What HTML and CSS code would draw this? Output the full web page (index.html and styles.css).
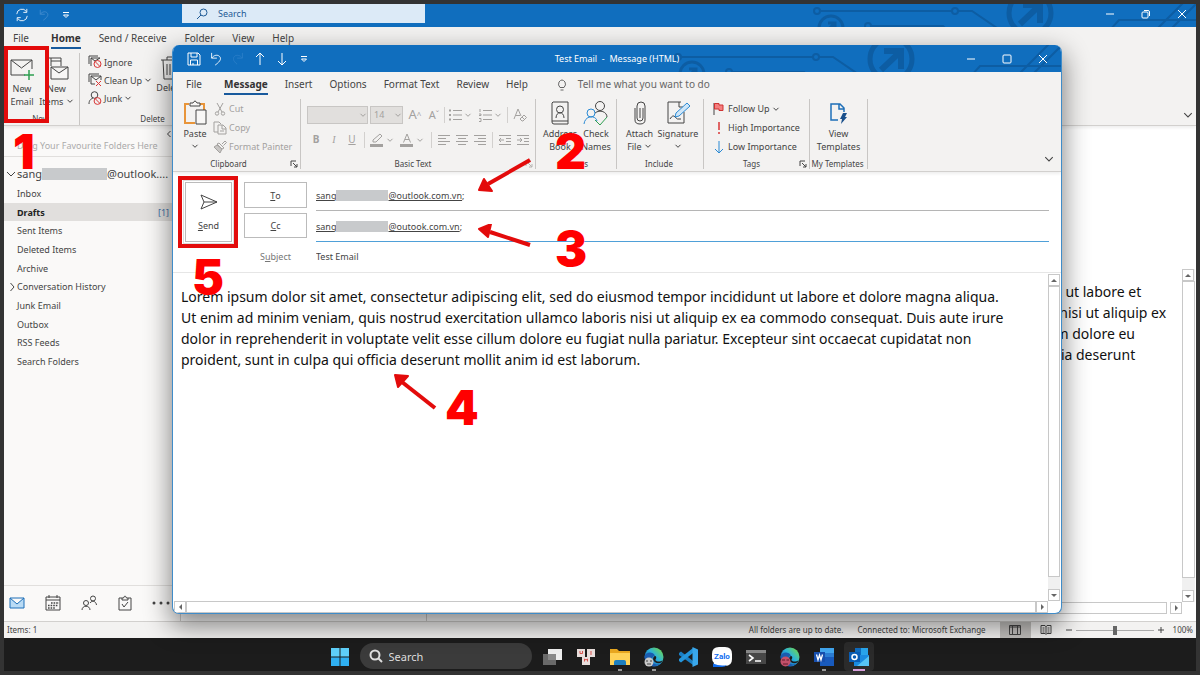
FILE: index.html
```html
<!DOCTYPE html>
<html lang="en">
<head>
<meta charset="utf-8">
<title>Test Email - Message (HTML)</title>
<link rel="stylesheet" href="styles.css">
</head>
<body>
<svg class="defs" aria-hidden="true">
  <defs>
    <linearGradient id="aqua" x1="0" y1="1" x2="1" y2="0"><stop offset=".2" stop-color="#1668bd"/><stop offset=".55" stop-color="#2bb3dc"/><stop offset=".85" stop-color="#63d36a"/></linearGradient>
  </defs>
  <symbol id="chev" viewBox="0 0 8 8"><path d="M1.5 2.8 4 5.3 6.5 2.8"/></symbol>
  <symbol id="launch" viewBox="0 0 8 8"><path d="M1 6V1h5M3 3l4 4M7 4v3H4"/></symbol>
  <symbol id="circuit" viewBox="0 -6 410 34">
    <g fill="none" stroke="#0d5da3" stroke-width="2">
      <circle cx="21" cy="7" r="3"/><path d="M24 7h132M162 7h14l25 17"/><circle cx="159" cy="7" r="3"/>
      <circle cx="35" cy="24" r="12" stroke-width="3"/><path d="M30 28l8-8M32 19h7v7" stroke-width="3"/>
      <circle cx="72" cy="22" r="3"/><path d="M75 22h72l6 6"/>
      <circle cx="234" cy="9" r="21" stroke-width="5"/>
      <path d="M224 20 243 2M227 1h17v18" stroke-width="6"/>
      <path d="M314 26l9-10h87M360 26 392-6M374 26 406-6"/>
    </g>
  </symbol>
  <symbol id="sync" viewBox="0 0 16 16"><path d="M2 7a6 6 0 0 1 11-3M14 9a6 6 0 0 1-11 3M13.500 1v4h-4M2.500 15v-4h4"/></symbol>
  <symbol id="undo" viewBox="0 0 14 16"><path d="M2 1v6h6M2 7c3-4 7-4 9-2s2 5-5 10"/></symbol>
  <symbol id="redo" viewBox="0 0 14 16"><path d="M12 1v6H6M12 7C9 3 5 3 3 5s-2 5 3 9"/></symbol>
  <symbol id="custom" viewBox="0 0 8 8"><path d="M1 1.500h6M1.500 4h5L4 6.500z"/></symbol>
  <symbol id="close" viewBox="0 0 10 10"><path d="M1 1l8 8M9 1 1 9"/></symbol>
  <symbol id="min" viewBox="0 0 10 10"><path d="M1 5h8"/></symbol>
  <symbol id="edge" viewBox="0 0 20 20">
    <circle cx="10" cy="10" r="9.500" fill="url(#aqua)"/>
    <path d="M.600 9C2 5 9 4 11 9c-3 0-4 4-2 7 2 2 6 2 8.500-.5C14 21 1 21 .600 9z" fill="#1a5cb0"/>
    <path d="M11.500 9c1.500 1 .5 3-.2 4 1.500 2 5 2 7.500 0l-1.500 2.500c-3 1.500-7 .5-8-2.500-.6-2 .4-4 2.200-4z" fill="#1c1c1c"/>
  </symbol>
</svg>

<div class="screen">
  <main class="outlook">
    <header class="titlebar main-title">
      <svg class="circuit"><use href="#circuit"/></svg>
      <div class="quick">
        <button aria-label="Send/Receive all folders"><svg class="ic i14"><use href="#sync"/></svg></button>
        <button class="faded" aria-label="Undo" disabled><svg class="ic i12"><use href="#undo"/></svg></button>
        <button aria-label="Customize toolbar"><svg class="ic i8"><use href="#custom"/></svg></button>
      </div>
      <label class="top-search">
        <svg class="ic i12" viewBox="0 0 12 12"><circle cx="7.500" cy="4.500" r="3.500"/><path d="M5 7 1 11"/></svg>
        <input type="search" placeholder="Search" aria-label="Search">
      </label>
      <div class="controls">
        <button aria-label="Minimize"><svg class="ic i10"><use href="#min"/></svg></button>
        <button aria-label="Restore"><svg class="ic i10" viewBox="0 0 10 10"><rect x="1" y="3" width="6" height="6" rx="1"/><path d="M3 1.500h4q1.500 0 1.500 1.500v4"/></svg></button>
        <button aria-label="Close"><svg class="ic i10"><use href="#close"/></svg></button>
      </div>
    </header>

    <nav class="tabs main-tabs">
      <button>File</button><button class="on">Home</button><button>Send / Receive</button><button>Folder</button><button>View</button><button>Help</button>
    </nav>

    <section class="ribbon main-ribbon">
      <div class="group new-group">
        <div class="tools">
          <button class="big">
            <svg class="ic i24" viewBox="0 0 24 24"><path d="M15 18H1V3h21v9M1 3l10.500 8L22 3"/><path d="M19 13v10M14 18h10" stroke="#2e9e50" stroke-width="1.500"/></svg>
            <span>New<br>Email</span>
          </button>
          <button class="big">
            <svg class="ic i24" viewBox="0 0 24 24"><path d="M6 9V1H0M6 1h10v8M6 4h10M6 10h17v12H6zM6 10l8 6 9-6" fill="#f8f7f6"/></svg>
            <span>New<br>Items <svg class="ic i8"><use href="#chev"/></svg></span>
          </button>
        </div>
        <div class="caption"><span>New</span></div>
      </div>
      <div class="group delete-group">
        <div class="tools">
          <div class="stack">
            <button><svg class="ic i14" viewBox="0 0 14 14"><path d="M3 11V3h9M1 9V1h9M3 3l4 3 5-3"/><circle cx="9.500" cy="9" r="3.500" stroke="#d93636"/><path d="M7 6.500 12 11.500" stroke="#d93636"/></svg>Ignore</button>
            <button><svg class="ic i14" viewBox="0 0 14 14"><path d="M7 11H3V3h10v4M1 9V1h10M3 3l5 4 5-4"/><path d="M8 8l5 5M13 8l-5 5" stroke="#d93636"/></svg>Clean Up <svg class="ic i8"><use href="#chev"/></svg></button>
            <button><svg class="ic i14" viewBox="0 0 14 14"><circle cx="6.500" cy="4" r="3.300"/><path d="M1 13c0-4 2-5 4-6"/><circle cx="9.500" cy="10" r="3.400" stroke="#d93636"/><path d="M7 7.500 12 12.500" stroke="#d93636"/></svg>Junk <svg class="ic i8"><use href="#chev"/></svg></button>
          </div>
          <button class="big delete"><svg class="ic i24" viewBox="0 0 24 24"><path d="M3 4h18M9 4V1h6v3M5 4l1 19h12l1-19M9 8v11M12 8v11M15 8v11"/></svg><span>Delete</span></button>
        </div>
        <div class="caption"><span>Delete</span></div>
      </div>
      <button class="collapse" aria-label="Collapse ribbon"><svg class="ic i12"><use href="#chev"/></svg></button>
    </section>

    <div class="workspace">
      <aside class="folders">
        <div class="favs"><span>Drag Your Favourite Folders Here</span><svg class="ic i8 fold" viewBox="0 0 8 8"><path d="M5.500 1 2.500 4l3 3"/></svg></div>
        <div class="account"><svg class="ic i8" viewBox="0 0 8 8"><path d="M0 2l4 4 4-4"/></svg>sang<i class="redact"></i>@outlook....</div>
        <ul>
          <li><a href="#inbox">Inbox</a></li>
          <li class="sel"><a href="#drafts">Drafts</a><b>[1]</b></li>
          <li><a href="#sent">Sent Items</a></li>
          <li><a href="#deleted">Deleted Items</a></li>
          <li><a href="#archive">Archive</a></li>
          <li><svg class="ic i8 twist" viewBox="0 0 8 8"><path d="M2.500 0l3.500 4-3.500 4"/></svg><a href="#history">Conversation History</a></li>
          <li><a href="#junk">Junk Email</a></li>
          <li><a href="#outbox">Outbox</a></li>
          <li><a href="#rss">RSS Feeds</a></li>
          <li><a href="#search">Search Folders</a></li>
        </ul>
        <nav class="modules">
          <button aria-label="Mail"><svg class="ic i16" viewBox="0 0 16 16"><path d="M1 3h14v10H1zM1 3l7 6 7-6" fill="#b9dbf5" stroke="#1d6fb8"/></svg></button>
          <button aria-label="Calendar"><svg class="ic i16" viewBox="0 0 16 16"><path d="M1 2h14v13H1zM1 5h14M4 0v3M12 0v3"/><path d="M6 8h8M3 10.500h10M3 13h7" stroke-width="1.600" stroke-dasharray="1.600 1"/></svg></button>
          <button aria-label="People"><svg class="ic i16" viewBox="0 0 16 16"><circle cx="5" cy="8" r="2.500"/><path d="M1 15c0-5 8-5 8 0"/><circle cx="12" cy="3.500" r="2.500"/><path d="M9 8c2-3 6-2 6.500 2"/></svg></button>
          <button aria-label="Tasks"><svg class="ic i16" viewBox="0 0 16 16"><path d="M5 3H2v12h12V3h-3M5 5V3h1.500q1.500-4 3 0H11v2zM5 9l2 3 4-5"/></svg></button>
          <button aria-label="More"><svg class="ic i18" viewBox="0 0 18 18"><path d="M2 9h.01M9 9h.01M16 9h.01" stroke-width="3" stroke-linecap="round"/></svg></button>
        </nav>
      </aside>
      <div class="maillist"></div>
      <article class="reading">
        <p>Lorem ipsum dolor sit amet, consectetur adipiscing elit, sed do eiusmod tempor incididunt ut labore et dolore magna aliqua. Ut enim ad minim veniam, quis nostrud exercitation ullamco laboris nisi ut aliquip ex ea commodo consequat. Duis aute irure dolor in reprehenderit in voluptate velit esse cillum dolore eu fugiat nulla pariatur. Excepteur sint occaecat cupidatat non proident, sunt in culpa qui officia deserunt mollit anim id est laborum.</p>
        <div class="vbar"><button class="up" aria-label="Scroll up"></button><i class="thumb"></i><button class="down" aria-label="Scroll down"></button></div>
        <div class="hbar"><i class="thumb"></i><button class="right" aria-label="Scroll right"></button></div>
      </article>
    </div>

    <footer class="status">
      <span class="items">Items: 1</span>
      <span>All folders are up to date.</span>
      <span class="conn">Connected to: Microsoft Exchange</span>
      <button class="view on" aria-label="Normal view"><svg class="ic i12" viewBox="0 0 12 12"><path d="M.500 1.500h11v9H.500zM3.500 1.500v9M8.500 1.500v9M.500 3h11"/></svg></button>
      <button class="view" aria-label="Reading view"><svg class="ic i12" viewBox="0 0 12 12"><path d="M1 1.500h4l1 1 1-1h4v8H7l-1 1-1-1H1zM6 2v8M2.500 4h2M2.500 6h2M7.500 4h2M7.500 6h2M2.500 8h2M7.500 8h2"/></svg></button>
      <button class="zoom" aria-label="Zoom out"><svg class="ic i8" viewBox="0 0 8 8"><path d="M1 4h6"/></svg></button>
      <input type="range" value="50" aria-label="Zoom">
      <button class="zoom" aria-label="Zoom in"><svg class="ic i8" viewBox="0 0 8 8"><path d="M1 4h6M4 1v6"/></svg></button>
      <span class="pct">100%</span>
    </footer>
  </main>

  <footer class="taskbar">
    <button aria-label="Start"><svg class="i20" viewBox="0 0 20 20"><path d="M1 1h8.500v8.500H1zM10.500 1H19v8.500h-8.500z" fill="#5fd0fa"/><path d="M1 10.500h8.500V19H1zM10.500 10.500H19V19h-8.500z" fill="#2fb0f2"/></svg></button>
    <label class="task-search"><svg class="ic i14" viewBox="0 0 14 14"><circle cx="6" cy="6" r="4.500"/><path d="M9.500 9.500 13 13"/></svg><input type="search" placeholder="Search" aria-label="Search Windows"></label>
    <button aria-label="Task view"><svg class="i20" viewBox="0 0 20 20"><path d="M6 2h14v11H6z" fill="#eee"/><path d="M1 7h13v11H1z" fill="#777" opacity=".85"/></svg></button>
    <button aria-label="Keys"><svg class="i20" viewBox="0 0 20 20"><path d="M1 2h8v8H1zM11 2h8v8h-8zM6 10h8v8H6z" fill="#e8dedc"/><path d="M4 4v2.500h2.500V4M15 4v4M8.500 14.500v-2.500l1.500 1 1.500-1v2.500" fill="none" stroke="#d9534f"/></svg></button>
    <button class="run" aria-label="File Explorer"><svg class="i20" viewBox="0 0 20 20"><path d="M0 2h7l2 2h11v14H0z" fill="#e9a820"/><path d="M0 6h20v12H0z" fill="#ffd257"/><path d="M4 18v-3q0-2 2-2h8q2 0 2 2v3z" fill="#1d7fbf"/></svg></button>
    <button class="run" aria-label="Edge work"><svg class="i20" viewBox="0 0 20 20"><use href="#edge"/><circle cx="5" cy="15" r="4.500" fill="#c9c9c9"/><path d="M2 14h2M6 14h2M3 17h4" stroke="#444"/></svg></button>
    <button aria-label="VS Code"><svg class="i20" viewBox="0 0 20 20"><path d="M1 6l2-1.500L15 14v4L1 8z" fill="#1a7fc4"/><path d="M1 14l2 1.500L15 6V1L1 12z" fill="#2596dc"/><path d="M14.500 0 20 2.500v15L14.500 20z" fill="#3aa8ec"/></svg></button>
    <button aria-label="Zalo"><svg class="i20" viewBox="0 0 20 20"><path d="M7 0h6q7 0 7 7v5q0 7-7 7H6l-5 1 1-4q-2-2-2-5V7q0-7 7-7z" fill="#fff"/><path d="M1 16.500q7 3 14 1.500-2 2-5 2H1z" fill="#0f6cf0"/><text x="10" y="12" class="zalo">Zalo</text></svg></button>
    <button aria-label="Terminal"><svg class="i20" viewBox="0 0 20 20"><path d="M0 3h20v14H0z" fill="#474747"/><path d="M0 3h20v3H0z" fill="#888"/><path d="M3 8l4 3-4 3M9 14h6" fill="none" stroke="#fff" stroke-width="1.600"/></svg></button>
    <button aria-label="Edge personal"><svg class="i20" viewBox="0 0 20 20"><use href="#edge"/><circle cx="5.500" cy="14.500" r="5" fill="#c4506a"/><path d="M2 13h3M6.500 13h2.500M3 17h5" stroke="#611d2d"/></svg></button>
    <button class="run" aria-label="Word"><svg class="i20" viewBox="0 0 20 20"><path d="M6 1h14v5H6z" fill="#41a5ee"/><path d="M6 6h14v4.500H6z" fill="#2b7cd3"/><path d="M6 10h14v9H6z" fill="#185abd"/><path d="M0 5h11v10H0z" fill="#174fae"/><path d="M2.500 7.500 4 13l1.500-5L7 13l1.500-5.500" fill="none" stroke="#fff" stroke-width="1.300"/></svg></button>
    <button class="run active" aria-label="Outlook"><svg class="i20" viewBox="0 0 20 20"><path d="M6 1h6v7H6z" fill="#0f6cbf"/><path d="M12 1h7v7h-7z" fill="#29a5ec"/><path d="M5 8h15v11H5z" fill="#1a8be0"/><path d="M20 9v10H8z" fill="#56c4f5"/><path d="M0 5h11v10H0z" fill="#0a5db3"/><circle cx="5.500" cy="10" r="2.500" fill="none" stroke="#fff" stroke-width="1.500"/></svg></button>
  </footer>

  <section class="message" aria-label="Test Email - Message (HTML)">
    <header class="titlebar msg-title">
      <svg class="circuit"><use href="#circuit"/></svg>
      <div class="quick">
        <button aria-label="Save"><svg class="ic i14" viewBox="0 0 14 14"><path d="M1 1h10l2 2v10H1zM4 1v4h6V1M3.500 13V8h7v5M6 13v-2"/></svg></button>
        <button aria-label="Undo"><svg class="ic i14"><use href="#undo"/></svg></button>
        <button class="faded" aria-label="Redo" disabled><svg class="ic i14"><use href="#redo"/></svg></button>
        <button aria-label="Previous item"><svg class="ic i14" viewBox="0 0 14 14"><path d="M7 13V1M3 5l4-4 4 4"/></svg></button>
        <button aria-label="Next item"><svg class="ic i14" viewBox="0 0 14 14"><path d="M7 1v12M3 9l4 4 4-4"/></svg></button>
        <button aria-label="Customize toolbar"><svg class="ic i8"><use href="#custom"/></svg></button>
      </div>
      <h1>Test Email&nbsp; -&nbsp; Message (HTML)</h1>
      <div class="controls">
        <button aria-label="Minimize"><svg class="ic i10"><use href="#min"/></svg></button>
        <button aria-label="Maximize"><svg class="ic i10" viewBox="0 0 10 10"><rect x="1" y="1" width="8" height="8" rx="1"/></svg></button>
        <button aria-label="Close"><svg class="ic i10"><use href="#close"/></svg></button>
      </div>
    </header>

    <nav class="tabs msg-tabs">
      <button>File</button><button class="on">Message</button><button>Insert</button><button>Options</button><button>Format Text</button><button>Review</button><button>Help</button>
      <button class="tell"><svg class="ic i12" viewBox="0 0 12 12"><path d="M4 8.500Q1.500 6 3 3q3-4 6 0 1.500 3-1 5.500zM4.500 11h3"/></svg>Tell me what you want to do</button>
    </nav>

    <section class="ribbon msg-ribbon">
      <div class="group g-clip">
        <div class="tools">
          <button class="big paste"><svg class="ic i26" viewBox="0 0 26 26"><path d="M13 23H3V4h4M18 4h4v6" stroke="#e8953a" stroke-width="2"/><path d="M8 6V3h3q2-4 4 0h3v3zM14 10h10v14H14z" fill="#f8f7f6"/></svg><span>Paste<br><svg class="ic i8"><use href="#chev"/></svg></span></button>
          <div class="stack">
            <button disabled><svg class="ic i14" viewBox="0 0 14 14"><path d="M4 1l5 9M10 1 5 10"/><circle cx="4" cy="11.500" r="1.700"/><circle cx="10" cy="11.500" r="1.700"/></svg>Cut</button>
            <button disabled><svg class="ic i14" viewBox="0 0 14 14"><path d="M5 11H1V1h5l2 2M5 4h5l3 3v6H5zM9 4v4h4M7 10h4"/></svg>Copy</button>
            <button disabled><svg class="ic i14" viewBox="0 0 14 14"><path d="M9 4l3-3 1.500 1.500-3 3M6 3l5 5-2 1-5-5z"/><path d="M4 5 1 7l6 6 2-4z" fill="#c8c6c4"/></svg>Format Painter</button>
          </div>
        </div>
        <div class="caption"><span>Clipboard</span><svg class="ic i8"><use href="#launch"/></svg></div>
      </div>

      <div class="group g-text">
        <div class="tools rows">
          <div class="row upper">
            <span class="pick face"><select aria-label="Font" disabled><option></option></select><svg class="ic i8"><use href="#chev"/></svg></span>
            <span class="pick size"><select aria-label="Font size" disabled><option>14</option></select><svg class="ic i8"><use href="#chev"/></svg></span>
            <button disabled class="glyph large">A<sup>^</sup></button>
            <button disabled class="glyph">A<sup>ˇ</sup></button>
            <i class="sep"></i>
            <button disabled aria-label="Bullets"><svg class="ic i14" viewBox="0 0 14 14"><path d="M5 2.500h9M5 7h9M5 11.500h9"/><path d="M1 2.500h2M1 7h2M1 11.500h2" stroke-width="2"/></svg></button><svg class="ic i8 drop"><use href="#chev"/></svg>
            <button disabled aria-label="Numbering"><svg class="ic i14" viewBox="0 0 14 14"><path d="M5 2.500h9M5 7h9M5 11.500h9M2 1v3M1 6h2v1.500H1M1 10.500h2v3H1"/></svg></button><svg class="ic i8 drop"><use href="#chev"/></svg>
            <i class="sep"></i>
            <button disabled class="clear" aria-label="Clear formatting"><svg class="ic i14" viewBox="0 0 14 14"><path d="M1 11 5 1l3 7M2.500 7.500H7M7 11l4-4 2.500 2.500-3.500 3.500H9zM9 9l2.500 2.500"/></svg></button>
          </div>
          <div class="row">
            <button disabled class="glyph2"><b>B</b></button>
            <button disabled class="glyph2"><em>I</em></button>
            <button disabled class="glyph2"><u>U</u></button>
            <i class="sep"></i>
            <button disabled aria-label="Highlight"><svg class="ic i14" viewBox="0 0 14 14"><path d="M3 9V7l7-6 2 2-6 6z"/><path d="M0 12.500h13" stroke-width="3"/></svg></button><svg class="ic i8 drop"><use href="#chev"/></svg>
            <button disabled aria-label="Font colour"><svg class="ic i14" viewBox="0 0 14 14"><path d="M3.500 9.500 7 1l3.500 8.500M5 6.500h4"/><path d="M0 12.500h13" stroke-width="3"/></svg></button><svg class="ic i8 drop"><use href="#chev"/></svg>
            <i class="sep"></i>
            <button disabled aria-label="Align left"><svg class="ic i14" viewBox="0 0 14 14"><path d="M1 2.500h12M1 5.500h8M1 8.500h12M1 11.500h8"/></svg></button>
            <button disabled aria-label="Centre"><svg class="ic i14" viewBox="0 0 14 14"><path d="M1 2.500h12M3 5.500h8M1 8.500h12M3 11.500h8"/></svg></button>
            <button disabled aria-label="Align right"><svg class="ic i14" viewBox="0 0 14 14"><path d="M1 2.500h12M5 5.500h8M1 8.500h12M5 11.500h8"/></svg></button>
            <i class="sep"></i>
            <button disabled aria-label="Decrease indent"><svg class="ic i14" viewBox="0 0 14 14"><path d="M1 2.500h12M8 5.500h5M8 8.500h5M1 11.500h12M6 7H1M3 5 1 7l2 2"/></svg></button>
            <button disabled aria-label="Increase indent"><svg class="ic i14" viewBox="0 0 14 14"><path d="M1 2.500h12M8 5.500h5M8 8.500h5M1 11.500h12M1 7h5M4 5l2 2-2 2"/></svg></button>
          </div>
        </div>
        <div class="caption"><span>Basic Text</span><svg class="ic i8 dim"><use href="#launch"/></svg></div>
      </div>

      <div class="group g-names">
        <div class="tools">
          <button class="big"><svg class="ic i26" viewBox="0 0 26 26"><path d="M6 2h15v22H7q-2 0-2-2V3zM5 21h16M9 18c0-7 8-7 8 0"/><circle cx="13" cy="9.500" r="3.500"/></svg><span>Address<br>Book</span></button>
          <button class="big"><svg class="ic i26" viewBox="0 0 26 26"><circle cx="17" cy="6" r="4.500"/><path d="M12 13c5-4 12-1 12 4"/><circle cx="8" cy="13" r="4" stroke="#2a8ad4"/><path d="M1 24c1-9 12-9 13-3" stroke="#2a8ad4"/><path d="M12 20l5 5 7-8" stroke="#2e9e50"/></svg><span>Check<br>Names</span></button>
        </div>
        <div class="caption"><span>Names</span></div>
      </div>

      <div class="group g-incl">
        <div class="tools">
          <button class="big"><svg class="ic i26" viewBox="0 0 26 26"><path d="M16 8v10q0 3-3 3t-3-3V6q0-4 4-4t4 4v14q0 4-5 4t-5-4V8M13 8v10"/></svg><span>Attach<br>File <svg class="ic i8"><use href="#chev"/></svg></span></button>
          <button class="big sign"><svg class="ic i26" viewBox="0 0 26 26"><path d="M16 2H3v21h16V12M14 2v5h4M5 19q3-5 5-2t6 2"/><path d="M10 17l1-4L22 3l3 3-11 10z" fill="#cfe6f8" stroke="#2a8ad4"/></svg><span>Signature<br><svg class="ic i8"><use href="#chev"/></svg></span></button>
        </div>
        <div class="caption"><span>Include</span></div>
      </div>

      <div class="group g-tags">
        <div class="tools">
          <div class="stack">
            <button><svg class="ic i14" viewBox="0 0 14 14"><path d="M2 1v12"/><path d="M2.500 1.500H7v1.500h4v5.500H7V7H2.500z" fill="#f47f7f" stroke="#cf3333"/></svg>Follow Up <svg class="ic i8"><use href="#chev"/></svg></button>
            <button><svg class="ic i14" viewBox="0 0 14 14"><path d="M7 1v8M7 11v2" stroke="#d93636" stroke-width="1.500"/></svg>High Importance</button>
            <button><svg class="ic i14" viewBox="0 0 14 14"><path d="M7 1v12M3 9l4 4 4-4" stroke="#2a8ad4"/></svg>Low Importance</button>
          </div>
        </div>
        <div class="caption"><span>Tags</span><svg class="ic i8"><use href="#launch"/></svg></div>
      </div>

      <div class="group g-tmpl">
        <div class="tools">
          <button class="big"><svg class="ic i26" viewBox="0 0 26 26"><path d="M13 20H6V4h9l4 4v4M14 4v5h5" stroke="#1e6fb8" stroke-width="1.500"/><path d="M18 13h4l-2 4h2l-6 7 1-5h-2z" fill="#1a4f8a" stroke="none"/></svg><span>View<br>Templates</span></button>
        </div>
        <div class="caption"><span>My Templates</span></div>
      </div>
      <button class="collapse" aria-label="Collapse ribbon"><svg class="ic i12"><use href="#chev"/></svg></button>
    </section>

    <form class="compose">
      <button type="button" class="send"><svg class="ic i18" viewBox="0 0 18 18"><path d="M1 2 17 9 1 16l3-7zM4 9h13"/></svg><span><u>S</u>end</span></button>
      <div class="fields">
        <button type="button" class="field-btn" id="to"><u>T</u>o</button>
        <div class="line" role="textbox" aria-labelledby="to"><u>sang</u><i class="redact"></i><u>@outlook.com.vn</u>;</div>
        <button type="button" class="field-btn" id="cc"><u>C</u>c</button>
        <div class="line focus" role="textbox" aria-labelledby="cc"><u>sang</u><i class="redact"></i><u>@outook.com.vn</u>;</div>
        <label for="subject">S<u>u</u>bject</label>
        <input id="subject" type="text" value="Test Email">
      </div>
    </form>

    <div class="editor">
      <textarea aria-label="Message body" spellcheck="false">Lorem ipsum dolor sit amet, consectetur adipiscing elit, sed do eiusmod tempor incididunt ut labore et dolore magna aliqua. Ut enim ad minim veniam, quis nostrud exercitation ullamco laboris nisi ut aliquip ex ea commodo consequat. Duis aute irure dolor in reprehenderit in voluptate velit esse cillum dolore eu fugiat nulla pariatur. Excepteur sint occaecat cupidatat non proident, sunt in culpa qui officia deserunt mollit anim id est laborum.</textarea>
      <div class="vbar"><button class="up" aria-label="Scroll up"></button><i class="thumb"></i><button class="down" aria-label="Scroll down"></button></div>
      <div class="hbar"><button class="left" aria-label="Scroll left"></button><i class="thumb"></i><button class="right" aria-label="Scroll right"></button></div>
    </div>
  </section>

  <div class="mark-box box-new"></div>
  <div class="mark-box box-send"></div>
  <span class="num n1">1</span>
  <span class="num n2">2</span>
  <span class="num n3">3</span>
  <span class="num n4">4</span>
  <span class="num n5">5</span>
  <svg class="arrow a2" viewBox="0 0 56 36"><path d="M54 3 12 27" stroke-width="4"/><path class="head" d="M3 33 8 22 16 34z"/></svg>
  <svg class="arrow a3" viewBox="0 0 56 36"><path d="M54 21 14 8" stroke-width="4"/><path class="head" d="M3 5 15 0 12 13z"/></svg>
  <svg class="arrow a4" viewBox="0 0 48 40"><path d="M43 36 10 10" stroke-width="4"/><path class="head" d="M3 3 16 4 6 15z"/></svg>
</div>
</body>
</html>
```

FILE: styles.css
```css
* { box-sizing: border-box; }
body { margin: 0; padding: 4px; height: 100vh; background: #333; font-family: "Noto Sans", sans-serif; font-size: 9px; line-height: 13px; color: #444; }
button, input, select, textarea { font: inherit; color: inherit; background: none; border: 0; padding: 0; margin: 0; outline: 0; }
button { display: flex; align-items: center; justify-content: center; white-space: nowrap; }
a { color: inherit; text-decoration: none; }
.defs { position: absolute; width: 0; height: 0; }
.ic { fill: none; stroke: currentColor; stroke-width: 1; flex: none; }
.i8 { width: 8px; height: 8px; }
.i10 { width: 10px; height: 10px; }
.i12 { width: 12px; height: 12px; }
.i14 { width: 14px; height: 14px; }
.i16 { width: 16px; height: 16px; }
.i18 { width: 18px; height: 18px; }
.i20 { width: 20px; height: 20px; }
.i24 { width: 24px; height: 24px; }
.i26 { width: 26px; height: 26px; }

.screen { position: relative; height: 100%; display: flex; flex-direction: column; overflow: hidden; }
.outlook { flex: 1; display: flex; flex-direction: column; background: #f3f2f1; min-height: 0; }

/* title bars */
.titlebar { position: relative; flex: none; display: flex; align-items: center; background: #106ebe; color: #fff; overflow: hidden; }
.main-title { height: 23px; padding-left: 7px; }
.msg-title { height: 27px; padding-left: 10px; }
.circuit { position: absolute; width: 410px; height: 34px; right: -10px; top: -6px; }
.msg-title .circuit { right: -6px; top: -1px; }
.quick { display: flex; position: relative; }
.quick button { width: 22px; height: 22px; }
.main-title .quick { width: 171px; align-self: flex-start; }
.quick .faded:disabled { color: #4a90d0; }
.msg-title .quick .faded:disabled { color: #2c7fc8; }
.top-search { width: 243px; height: 19px; align-self: flex-start; padding-left: 14px; display: flex; align-items: center; gap: 10px; background: #dceaf7; color: #1e5a96; }
.top-search input { flex: 1; min-width: 0; }
.top-search input::placeholder { color: #1e5a96; opacity: 1; }
.controls { position: relative; margin-left: auto; display: flex; align-self: stretch; }
.controls button { width: 36px; }
.main-title .controls { height: 19px; margin-right: -4px; }
.msg-title h1 { position: absolute; left: 0; right: 0; margin: 0; text-align: center; font-size: 9px; font-weight: 400; }

/* tabs */
.tabs { flex: none; display: flex; font-size: 10px; }
.tabs button { border-bottom: 2px solid transparent; }
.tabs .on { font-weight: 700; border-color: #185a9d; color: #333; }
.main-tabs { padding-left: 9px; gap: 18px; height: 24px; }
.main-tabs button { height: 22px; padding-top: 2px; }
.main-tabs .on { margin-left: 4px; }
.msg-tabs { padding-left: 13px; gap: 17px; height: 23px; background: #f3f2f1; }
.msg-tabs button { height: 23px; padding-top: 4px; }
.msg-tabs .on { margin-left: 5px; }
.msg-tabs .tell { gap: 10px; margin-left: 11px; color: #666; }

/* ribbons */
.ribbon { flex: none; display: flex; position: relative; background: #f3f2f1; border-bottom: 1px solid #d2d0ce; box-shadow: 0 2px 3px #0001; }
.main-ribbon { height: 75px; padding: 2px 0 0; }
.msg-ribbon { height: 77px; padding: 4px 0 2px; }
.group { flex: none; display: flex; flex-direction: column; border-right: 1px solid #c8c6c4; }
.tools { flex: 1; display: flex; min-height: 0; }
.caption { height: 11px; line-height: 11px; display: flex; align-items: center; font-size: 8px; padding-right: 2px; }
.caption span { flex: 1; text-align: center; white-space: nowrap; }
.big { flex-direction: column; justify-content: flex-start; gap: 1px; }
.big span { line-height: 13px; }
.stack { display: grid; grid-template-rows: repeat(3, 18px); align-content: start; }
.msg-ribbon .stack { grid-template-rows: repeat(3, 19px); }
.stack button { justify-content: flex-start; gap: 2px; }
button:disabled { color: #a3a19f; }
.new-group { width: 76px; padding-top: 4px; }
.new-group .big { width: 35px; }
.new-group .big:first-child { padding-left: 1px; }
.main-ribbon .caption { height: 13px; }
.delete-group { width: 140px; padding-left: 8px; }
.delete-group .stack { width: 62px; }
.delete { width: 40px; padding-top: 3px; }
.collapse { margin-left: auto; align-self: flex-end; width: 16px; height: 20px; }
.collapse .ic { stroke-width: .7; }
.msg-ribbon .collapse { margin-right: 4px; }
.dim { color: #b5b3b1; }
.g-clip { width: 128px; }
.g-text { width: 235px; }
.g-names { width: 81px; }
.g-incl { width: 87px; }
.g-tags { width: 106px; }
.g-tmpl { width: 58px; }
.msg-ribbon .big { padding-top: 1px; }
.paste { width: 40px; padding-left: 4px; }
.g-clip .caption span { padding-right: 6px; }
.g-names .tools { padding-left: 6px; }
.g-names .big { width: 36px; }
.g-incl .tools { padding-left: 1px; }
.g-incl .big { width: 43px; }
.g-incl .sign { width: 34px; }
.g-tags .stack { padding-left: 8px; }
.g-tmpl .tools { justify-content: center; }
.rows { flex-direction: column; padding: 6px 0 0 6px; gap: 6px; }
.row { display: flex; align-items: center; height: 19px; }
.row button { width: 18px; height: 19px; }
.row .drop { width: 8px; color: #a3a19f; margin-right: 4px; }
.sep { width: 1px; height: 16px; background: #d2d0ce; margin: 0 3px; }
.upper .sep { margin: 0 1px; }
.upper .clear { width: 22px; }
.pick { position: relative; display: block; height: 18px; margin-right: 2px; }
.pick select { appearance: none; width: 100%; height: 100%; background: #e1dfdd; border: 1px solid #c8c6c4; color: #a3a19f; padding-left: 3px; opacity: 1; }
.pick svg { position: absolute; right: 1px; top: 5px; color: #a3a19f; }
.face { width: 61px; }
.size { width: 33px; }
.glyph { font-size: 11px; }
.row .glyph.large { font-size: 13px; width: 20px; }
.glyph sup { font-size: 8px; line-height: 8px; }
.row .glyph2 { font-size: 10px; }
.glyph2 em { font-family: "Liberation Serif", serif; }

/* folder pane */
.workspace { flex: 1; display: flex; min-height: 0; background: #fff; }
.folders { width: 177px; display: flex; flex-direction: column; background: #faf9f8; border-right: 1px solid #d2d0ce; }
.favs { position: relative; height: 31px; padding: 13px 0 0 13px; border-bottom: 1px solid #e1dfdd; color: #aaa; }
.favs .fold { position: absolute; left: 161px; top: 4px; color: #444; }
.account { display: flex; align-items: center; height: 21px; margin-top: 6px; padding-left: 3px; font-size: 11px; white-space: nowrap; }
.account svg { margin-right: 2px; }
.redact { display: inline-block; background: #c8cacc; }
.account .redact { width: 65px; height: 12px; }
.folders ul { list-style: none; margin: 0; padding: 0; height: 187px; display: grid; grid-auto-rows: 1fr; }
.folders li { position: relative; display: flex; align-items: center; padding: 0 11px 0 13px; }
.folders li a { flex: 1; }
.folders .sel { background: #e1dfdd; font-weight: 700; color: #222; }
.folders .sel b { color: #4472a8; font-weight: 400; }
.twist { position: absolute; left: 4px; }
.modules { margin-top: auto; height: 36px; display: flex; align-items: center; border-top: 1px solid #e1dfdd; padding: 0 0 2px 4px; gap: 18px; }
.modules button { width: 18px; height: 18px; }
.maillist { width: 246px; border-right: 1px solid #d2d0ce; }
.reading { flex: 1; min-width: 0; display: grid; grid-template-columns: 1fr 13px; grid-template-rows: 1fr 12px; padding: 143px 1px 7px 0; }
.reading p { margin: 0; padding: 12px 10px 0 40px; font-size: 14px; line-height: 21px; color: #111; }

/* scroll bars */
.vbar { display: flex; flex-direction: column; background: #f0f0f0; }
.hbar { display: flex; }
.vbar button, .hbar button { flex: none; width: 12px; height: 12px; border: 1px solid #c8c8c8; background: #fff; }
.thumb { flex: 1; background: #fff; border: 1px solid #c8c8c8; }
.vbar .thumb { margin-bottom: 12px; }
.vbar button::before, .hbar button::before { content: ""; border: 3px solid transparent; }
.up::before { margin-top: -3px; border-bottom-color: #666 !important; }
.down::before { margin-bottom: -3px; border-top-color: #666 !important; }
.left::before { margin-left: -3px; border-right-color: #666 !important; }
.right::before { margin-right: -3px; border-left-color: #666 !important; }
.reading .right { margin-left: 3px; }

/* status bar */
.status { flex: none; height: 17px; display: flex; align-items: center; padding: 0 3px; background: #f3f2f1; border-top: 1px solid #d2d0ce; font-size: 8px; line-height: 12px; white-space: nowrap; }
.items { margin-right: auto; }
.conn { margin: 0 14px; }
.view { width: 31px; height: 16px; }
.view.on { background: #c2c0be; }
.status .zoom { width: 14px; }
.status input { appearance: none; width: 78px; height: 10px; background: linear-gradient(#aaa, #aaa) center / 100% 1px no-repeat; }
.status input::-webkit-slider-thumb { appearance: none; width: 4px; height: 9px; background: #666; }
.pct { margin-left: 5px; }

/* taskbar */
.taskbar { flex: none; height: 33px; display: flex; justify-content: center; align-items: stretch; background: #1c1c1c; color: #ddd; padding: 4px 4px 0 0; }
.taskbar button { position: relative; width: 34px; height: 29px; }
.task-search { width: 172px; height: 26px; margin: 1px 3px 0; padding-left: 9px; border-radius: 13px; background: #3b3b3b; display: flex; align-items: center; gap: 6px; font-size: 11px; }
.task-search .ic { stroke-width: 2; }
.task-search input { width: 100px; }
.task-search input::placeholder { color: #ddd; opacity: 1; }
.taskbar .run::after { content: ""; position: absolute; bottom: 0; width: 4px; height: 2px; background: #999; }
.taskbar .active { background: #2b2b2b; border-radius: 4px; width: 30px; margin-left: 3px; }
.taskbar .active::after { width: 12px; background: #d9a0dc; }
.zalo { font: 700 8px Roboto, sans-serif; fill: #0f6cf0; text-anchor: middle; }

/* message window */
.message { position: absolute; left: 168px; right: 134px; top: 41px; bottom: 57px; display: flex; flex-direction: column; background: #fff; border: 1px solid #3f8cc9; border-top: 0; border-radius: 7px; overflow: hidden; box-shadow: 0 10px 26px 2px #0007; }
.compose { flex: none; height: 101px; display: flex; gap: 12px; padding: 10px 12px 0 12px; border-bottom: 1px solid #e6e6e6; }
.send { flex: none; width: 47px; height: 60px; flex-direction: column; gap: 8px; border: 1px solid #bbb; outline: 1px solid #ddd; outline-offset: 1px; }
.fields { flex: 1; display: grid; grid-template-columns: 63px 1fr; grid-template-rows: 26px 25px 26px; column-gap: 9px; row-gap: 5px; }
.field-btn { border: 1px solid #bbb; }
.line { display: flex; align-items: center; height: 29px; border-bottom: 1px solid #b5b5b5; padding-bottom: 2px; }
.line.focus { border-bottom-color: #4fa0d8; }
.line .redact { width: 52px; height: 11px; }
.fields label { text-align: center; align-self: center; color: #777; }
.editor { flex: 1; min-height: 0; display: grid; grid-template-columns: 1fr 12px; grid-template-rows: 1fr 12px; padding: 1px 1px 0 1px; }
.editor textarea { resize: none; width: 100%; height: 100%; padding: 12px 36px 0 7px; font-size: 14px; line-height: 21px; color: #111; overflow: hidden; }

/* numbered walkthrough marks */
.mark-box { position: absolute; border: 4px solid #e30b0b; }
.box-new { left: 0; top: 42px; width: 45px; height: 77px; }
.box-send { left: 174px; top: 172px; width: 60px; height: 72px; }
.num { position: absolute; font: 900 48px/48px Inter, sans-serif; color: #f00; }
.n1 { left: 9px; top: 124px; }
.n2 { left: 551px; top: 124px; }
.n3 { left: 551px; top: 221px; }
.n4 { left: 441px; top: 380px; }
.n5 { left: 188px; top: 249px; }
.arrow { position: absolute; fill: none; stroke: #e30b0b; }
.arrow .head { fill: #e30b0b; stroke-width: 2; stroke-linejoin: round; }
.a2 { left: 472px; top: 153px; width: 56px; height: 36px; }
.a3 { left: 472px; top: 220px; width: 56px; height: 36px; }
.a4 { left: 388px; top: 368px; width: 48px; height: 40px; }
```
